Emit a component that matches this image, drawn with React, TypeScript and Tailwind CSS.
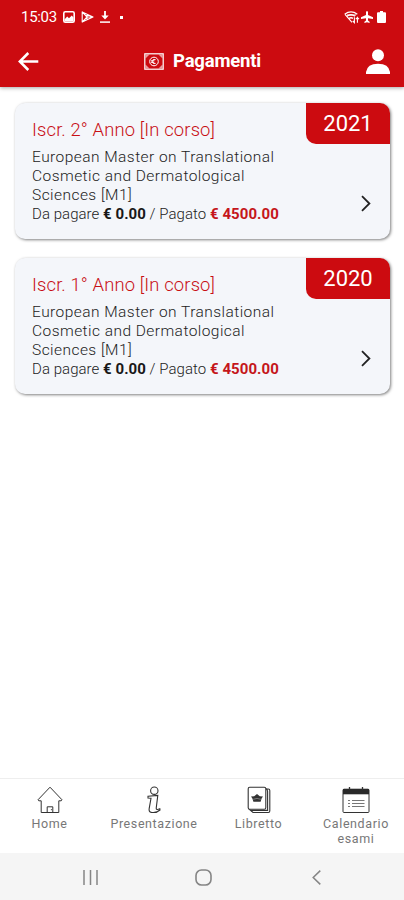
import type { ReactNode } from "react";

type Payment = {
  year: number;
  title: string;
  due: string;
  paid: string;
};

const payments: Payment[] = [
  { year: 2021, title: "Iscr. 2° Anno [In corso]", due: "€ 0.00", paid: "€ 4500.00" },
  { year: 2020, title: "Iscr. 1° Anno [In corso]", due: "€ 0.00", paid: "€ 4500.00" },
];

function StatusBar() {
  return (
    <div className="flex h-[34px] items-center pl-[21px] pr-[18px]">
      <span className="w-[37px] whitespace-nowrap text-[15px] tracking-[-0.3px]">15:03</span>
      <svg className="ml-[5px]" width="12" height="12" viewBox="0 0 12 12">
        <rect x="0.8" y="0.8" width="10.4" height="10.4" rx="1.5" fill="none" stroke="currentColor" strokeWidth="1.6" />
        <path d="M1.5 8.5 4.2 5.5 6 7.2 8.8 4.5 10.5 6.5V10.5H1.5Z" fill="currentColor" />
      </svg>
      <svg className="ml-[6px]" width="13" height="12" viewBox="0 0 13 12">
        <path d="M1.2 .9 12 6 1.2 11.1Z M1.2 .9 6 6 1.2 11.1 M6 6H11.5 M6 3.3V8.7" fill="none" stroke="currentColor" strokeWidth="1.1" strokeLinejoin="round" />
      </svg>
      <svg className="ml-[6px]" width="10" height="12" viewBox="0 0 10 12">
        <path d="M5 0V6" stroke="currentColor" strokeWidth="1.8" />
        <path d="M1.3 4.5H8.7L5 8.5Z" fill="currentColor" />
        <path d="M0 11.1H10" stroke="currentColor" strokeWidth="1.5" />
      </svg>
      <span className="ml-[10px] size-[3px] bg-current" />
      <div className="ml-auto flex items-center">
        <svg width="16" height="13" viewBox="0 0 16 13">
          <path d="M.7 3.2Q7 -1.4 13.3 3.2M3 5.2Q7 2.4 11 5.2M5 7.4Q7 6 9 7.4" fill="none" stroke="currentColor" strokeWidth="1.4" />
          <path d="M1 3.4 8 11.4M3 4H12M10.4 6.2V11.6L8.8 10M13.4 11.8V6.6L11.8 8.2M13.4 6.6 15 8.2" fill="none" stroke="currentColor" strokeWidth="1.1" />
        </svg>
        <svg className="ml-px" width="12" height="12" viewBox="0 0 12 12">
          <path d="M5 1Q6 -.8 7 1V4L12 6.2V8L7 7.2V9.5L8.6 10.8V12L6 11.2 3.4 12V10.8L5 9.5V7.2L0 8V6.2L5 4Z" fill="currentColor" />
        </svg>
        <svg className="ml-[4px]" width="9" height="12" viewBox="0 0 9 12">
          <path d="M3 0H6V1.3H8Q9 1.3 9 2.3V11Q9 12 8 12H1Q0 12 0 11V2.3Q0 1.3 1 1.3H3Z" fill="currentColor" />
        </svg>
      </div>
    </div>
  );
}

function BanknoteIcon() {
  return (
    <svg width="20" height="17" viewBox="0 0 20 17" fill="none" stroke="currentColor">
      <rect x="0.8" y="0.8" width="18.4" height="15.4" strokeWidth="1.2" />
      <path d="M1.5 1.5H5.5L1.5 5.5ZM18.5 1.5H14.5L18.5 5.5ZM18.5 15.5V11.5L14.5 15.5ZM1.5 15.5V11.5L5.5 15.5Z" fill="currentColor" fillOpacity="0.6" stroke="none" />
      <circle cx="10" cy="8.5" r="4.3" strokeWidth="1" />
      <path d="M11.6 6.6Q8.4 5.6 8.4 8.5T11.6 10.4M7 7.8H10.4M7 9.3H10.2" strokeWidth="1" />
    </svg>
  );
}

function Header() {
  return (
    <header className="h-[87px] bg-[#cc0b10] text-white shadow-[0_1px_4px_rgba(0,0,0,0.35)]">
      <StatusBar />
      <div className="flex h-[54px] items-center justify-between pl-[18px] pr-[14px]">
        <svg width="21" height="19" viewBox="0 0 21 19" fill="none" stroke="currentColor" strokeWidth="2.5">
          <path d="M20.3 9.5H2M10.3 1 1.8 9.5 10.3 18" />
        </svg>
        <div className="flex items-center gap-[9px]">
          <BanknoteIcon />
          <h1 className="text-[18.5px] font-bold leading-6 tracking-[-0.2px]">Pagamenti</h1>
        </div>
        <svg width="24" height="25" viewBox="0 0 24 25" fill="currentColor">
          <circle cx="12" cy="6.2" r="6" />
          <path d="M0 25V23Q1.2 14.7 12 14.7T24 23V25Z" />
        </svg>
      </div>
    </header>
  );
}

function PaymentCard({ year, title, due, paid }: Payment) {
  return (
    <article className="relative h-[136px] rounded-[10px] bg-[#f4f6fa] pl-[17px] pt-[15px] shadow-[1px_1px_3px_rgba(0,0,0,0.5)]">
      <h2 className="text-[18.4px] font-light leading-[24px] tracking-[0.14px] text-[#c80f14]">{title}</h2>
      <p className="mt-[6px] text-[15.5px] font-light leading-[19.2px] tracking-[0.45px] text-[#222]">
        European Master on Translational
        <br />
        Cosmetic and Dermatological
        <br />
        Sciences [M1]
      </p>
      <p className="text-[15px] font-light leading-[17px] tracking-[0.05px] text-[#222]">
        Da pagare <b className="font-bold text-[#181818]">{due}</b> / Pagato{" "}
        <b className="font-bold text-[#c5161b]">{paid}</b>
      </p>
      <span className="absolute right-0 top-0 flex h-[41px] w-[84px] items-center justify-center rounded-bl-[10px] rounded-tr-[10px] bg-[#cc0b10] text-[22px] text-white">
        {year}
      </span>
      <svg className="absolute right-[19px] top-[92px]" width="10" height="17" viewBox="0 0 10 17" fill="none" stroke="#222" strokeWidth="1.8">
        <path d="M1 1.2 8.4 8.5 1 15.8" />
      </svg>
    </article>
  );
}

function NavItem({ icon, label, className }: { icon: ReactNode; label: ReactNode; className: string }) {
  return (
    <div className={`flex shrink-0 flex-col items-center text-center text-[12.5px] leading-[15px] tracking-[0.6px] text-[#777] ${className}`}>
      <div className="mb-[2px] flex h-[28px] items-center text-[#333]">{icon}</div>
      <span>{label}</span>
    </div>
  );
}

function BottomNav() {
  return (
    <nav className="flex h-[75px] border-t border-[#eee] pt-[7px]">
      <NavItem
        className="w-[99px]"
        label="Home"
        icon={
          <svg width="26" height="28" viewBox="0 0 26 28" fill="none" stroke="currentColor" strokeWidth="1">
            <path d="M13 1.2 25 13.8 24.2 14.8H21.8V26.5H4.2V14.8H1.8L1 13.8Z" />
            <path d="M10.2 26V20.8H15.8V26M14.4 23.2V24.2" />
          </svg>
        }
      />
      <NavItem
        className="w-[110px]"
        label="Presentazione"
        icon={
          <svg width="14" height="28" viewBox="0 0 14 28" fill="none" stroke="currentColor" strokeWidth="1.1">
            <circle cx="7.3" cy="4.7" r="3.7" />
            <path d="M1 10.2 10.8 9.4 9.2 22.3Q9 24.3 12.8 22.8L13 24Q9.5 27.2 4.4 26.4 1.5 25.8 2.2 22.3L4 12.3 1 12Z" />
          </svg>
        }
      />
      <NavItem
        className="w-[99px]"
        label="Libretto"
        icon={
          <svg width="24" height="28" viewBox="0 0 24 28" fill="none" stroke="currentColor" strokeWidth="1.1">
            <path d="M19 3H21.3Q22.8 3 22.8 4.5V25Q22.8 26.5 21.3 26.5H6L2 23M19 2.5Q20.6 4 20.6 5.5V24.4H4" />
            <rect x="1.2" y="1.2" width="17.6" height="22" rx="1.5" fill="#fff" />
            <path d="M4 10.6 7.2 10.2 10 8 12.8 10.2 16 10.6 14.6 12.6 13.6 15.8H6.4L5.4 12.6Z" fill="currentColor" stroke="none" />
            <path d="M6.2 13.3Q10 11.6 13.8 13.3" stroke="#aaa" strokeWidth="0.6" />
          </svg>
        }
      />
      <NavItem
        className="w-[96px]"
        label={<>Calendario<br />esami</>}
        icon={
          <svg width="28" height="28" viewBox="0 0 28 28" fill="none" stroke="currentColor">
            <rect x="1" y="3.2" width="26" height="23.3" rx="1" strokeWidth="1" />
            <path d="M1 3H27V8.3H1Z" fill="#292929" stroke="none" />
            <path d="M7.5 1V4M20.5 1V4" strokeWidth="1.3" />
            <path d="M6 14.5H8M10 14.5H22.5M6 17.5H8M10 17.5H22.5M6 20.5H8M10 20.5H22.5" stroke="#777" strokeWidth="1" />
          </svg>
        }
      />
    </nav>
  );
}

function SystemNav() {
  return (
    <div className="flex h-[47px] items-center bg-[#f5f5f5] pl-[83px] pt-[2px] text-[#858585]">
      <svg width="15" height="15" viewBox="0 0 15 15" stroke="currentColor" strokeWidth="1.5">
        <path d="M1 0V15M7.5 0V15M14 0V15" />
      </svg>
      <svg className="ml-[97px]" width="17" height="17" viewBox="0 0 17 17" fill="none" stroke="currentColor" strokeWidth="1.6">
        <rect x="1" y="1" width="15" height="15" rx="5.5" />
      </svg>
      <svg className="ml-[100px]" width="9" height="15" viewBox="0 0 9 15" fill="none" stroke="currentColor" strokeWidth="1.5">
        <path d="M8.3 .6 1.2 7.5 8.3 14.4" />
      </svg>
    </div>
  );
}

export default function App() {
  return (
    <div className="flex h-[900px] w-[404px] flex-col overflow-hidden bg-white font-[Roboto,sans-serif]">
      <Header />
      <main className="flex flex-1 flex-col gap-[19px] pl-[15px] pr-[14px] pt-[16px]">
        {payments.map((payment) => (
          <PaymentCard key={payment.year} {...payment} />
        ))}
      </main>
      <BottomNav />
      <SystemNav />
    </div>
  );
}
